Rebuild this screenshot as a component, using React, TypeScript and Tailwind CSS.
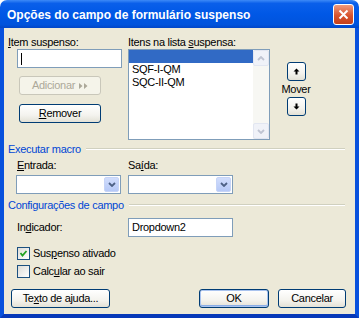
import React from "react";

const font = { fontFamily: '"Liberation Sans", Arial, sans-serif' };

const XpButton = ({
  children,
  className = "",
  disabled = false,
  isDefault = false,
}: {
  children: React.ReactNode;
  className?: string;
  disabled?: boolean;
  isDefault?: boolean;
}) => (
  <div
    className={
      "flex items-center justify-center h-[19px] rounded-[3px] border text-[11px] tracking-[-0.3px] " +
      (disabled
        ? "border-[#C9C7BA] bg-[#F5F4EA] text-[#ACA899] "
        : "border-[#003C74] bg-[linear-gradient(to_bottom,#FFFFFF_0%,#F4F3EE_60%,#E3E1D6_100%)] text-black ") +
      (isDefault ? "shadow-[inset_0_0_0_1px_#A9C3EE,inset_0_-1px_0_1px_#8AADE6] " : "") +
      className
    }
  >
    {children}
  </div>
);

const ArrowUp = () => (
  <svg width="7" height="7" viewBox="0 0 7 7">
    <path d="M3.5 0.5 L6.5 3.5 L4.5 3.5 L4.5 6.5 L2.5 6.5 L2.5 3.5 L0.5 3.5 Z" fill="#000" />
  </svg>
);

const ArrowDown = () => (
  <svg width="7" height="7" viewBox="0 0 7 7">
    <path d="M3.5 6.5 L6.5 3.5 L4.5 3.5 L4.5 0.5 L2.5 0.5 L2.5 3.5 L0.5 3.5 Z" fill="#000" />
  </svg>
);

const Chevron = ({ up = false, color }: { up?: boolean; color: string }) => (
  <svg width="8" height="5" viewBox="0 0 8 5">
    <path
      d={up ? "M1 4 L4 1 L7 4" : "M1 1 L4 4 L7 1"}
      fill="none"
      stroke={color}
      strokeWidth="1.8"
    />
  </svg>
);

const Combo = ({ className = "" }: { className?: string }) => (
  <div className={"flex h-[19px] w-[105px] border border-[#7F9DB9] bg-white " + className}>
    <div className="flex-1" />
    <div className="my-px mr-px flex w-[15px] items-center justify-center rounded-[2px] border border-[#C6D4F7] bg-[linear-gradient(to_bottom,#D1DDFC,#B6C9F7)]">
      <Chevron color="#4D6185" />
    </div>
  </div>
);

const Checkbox = ({ checked }: { checked: boolean }) => (
  <div className="flex h-[13px] w-[13px] items-center justify-center border border-[#1C5180] bg-[linear-gradient(135deg,#DCDCD7,#FFFFFF)]">
    {checked && (
      <svg width="9" height="9" viewBox="0 0 9 9">
        <path d="M1.5 4 L3.5 6.5 L7.5 2" fill="none" stroke="#21A121" strokeWidth="1.8" />
      </svg>
    )}
  </div>
);

const GroupHeader = ({ children }: { children: React.ReactNode }) => (
  <div className="flex h-[14px] items-center pr-[10px]">
    <span className="text-[11px] tracking-[-0.3px] text-[#0046D5]">{children}</span>
    <div className="ml-[5px] h-[2px] flex-1 border-t border-b border-t-[#D0D0BF] border-b-white" />
  </div>
);

const U = ({ children }: { children: React.ReactNode }) => (
  <span className="underline underline-offset-[1px]">{children}</span>
);

export default function App() {
  return (
    <div className="flex h-[318px] w-[359px] flex-col" style={font}>
      {/* title bar */}
      <div className="flex h-[28px] items-center justify-between rounded-t-[7px] bg-[linear-gradient(to_bottom,#3D8AF7_0%,#0A5FEA_12%,#0058E6_50%,#0053DC_88%,#0146C7_100%)] pl-[7px]">
        <span className="pt-[2px] text-[12px] font-bold text-white">
          Opções do campo de formulário suspenso
        </span>
        <div className="mr-[5px] flex h-[21px] w-[21px] items-center justify-center rounded-[3px] border border-white bg-[linear-gradient(to_bottom,#EE9A7E,#D9542E_55%,#C4401B)]">
          <svg width="11" height="11" viewBox="0 0 11 11">
            <path d="M1.5 1.5 L9.5 9.5 M9.5 1.5 L1.5 9.5" stroke="#fff" strokeWidth="2" />
          </svg>
        </div>
      </div>

      {/* body */}
      <div className="flex flex-1 flex-col border-x-[4px] border-b-[4px] border-x-[#0851DD] border-b-[#0638B8] bg-[#ECE9D8] pl-[4px] pt-[7px] text-[11px] tracking-[-0.3px] text-black">
        {/* top row */}
        <div className="flex h-[105px]">
          <div className="flex w-[120px] flex-col">
            <div className="h-[14px] leading-[14px]">
              <U>I</U>tem suspenso:
            </div>
            <div className="ml-[9px] flex h-[19px] w-[105px] items-center border border-[#7F9DB9] bg-white">
              <span className="ml-[3px] h-[12px] w-px bg-black" />
            </div>
            <XpButton disabled className="ml-[11px] mt-[8px] w-[82px] gap-[4px]">
              Adicionar
              <svg width="9" height="6" viewBox="0 0 9 6">
                <path d="M0 0 L3.5 3 L0 6 Z M5 0 L8.5 3 L5 6 Z" fill="#ACA899" />
              </svg>
            </XpButton>
            <XpButton className="ml-[11px] mt-[9px] w-[82px]">
              <U>R</U>emover
            </XpButton>
          </div>

          <div className="flex w-[142px] flex-col">
            <div className="h-[14px] leading-[14px]">
              Itens na lista <U>s</U>uspensa:
            </div>
            <div className="flex h-[91px] border border-[#7F9DB9] bg-white">
              <div className="flex flex-1 flex-col">
                <div className="h-[13px] bg-[#316AC5]" />
                <div className="h-[13px] pl-[3px] leading-[13px]">SQF-I-QM</div>
                <div className="h-[13px] pl-[3px] leading-[13px]">SQC-II-QM</div>
              </div>
              <div className="flex w-[16px] flex-col bg-[#F7F7F3]">
                <div className="flex h-[16px] items-center justify-center rounded-[2px] border border-[#E2E6F1] bg-[#F0F2F8]">
                  <Chevron up color="#BFC4D2" />
                </div>
                <div className="flex-1" />
                <div className="flex h-[16px] items-center justify-center rounded-[2px] border border-[#E2E6F1] bg-[#F0F2F8]">
                  <Chevron color="#BFC4D2" />
                </div>
              </div>
            </div>
          </div>

          <div className="ml-[6px] flex w-[40px] flex-col items-center pt-[27px]">
            <XpButton className="w-[19px]">
              <ArrowUp />
            </XpButton>
            <div className="mt-px h-[14px] leading-[14px]">Mover</div>
            <XpButton className="mt-px w-[19px]">
              <ArrowDown />
            </XpButton>
          </div>
        </div>

        {/* executar macro */}
        <div className="mt-[2px]">
          <GroupHeader>Executar macro</GroupHeader>
        </div>
        <div className="mt-[2px] flex h-[14px] leading-[14px]">
          <div className="ml-[9px] w-[111px]">
            <U>E</U>ntrada:
          </div>
          <div>
            Sa<U>í</U>da:
          </div>
        </div>
        <div className="mt-[3px] flex">
          <Combo className="ml-[8px]" />
          <Combo className="ml-[7px]" />
        </div>

        {/* configuracoes */}
        <div className="mt-[4px]">
          <GroupHeader>Configurações de campo</GroupHeader>
        </div>
        <div className="mt-[6px] flex items-center">
          <div className="ml-[9px] w-[111px]">
            In<U>d</U>icador:
          </div>
          <div className="flex h-[19px] w-[105px] items-center border border-[#7F9DB9] bg-white pl-[3px]">
            Dropdown2
          </div>
        </div>
        <div className="ml-[9px] mt-[10px] flex h-[13px] items-center gap-[3px]">
          <Checkbox checked />
          <span>
            Sus<U>p</U>enso ativado
          </span>
        </div>
        <div className="ml-[9px] mt-[5px] flex h-[13px] items-center gap-[3px]">
          <Checkbox checked={false} />
          <span>
            Calc<U>u</U>lar ao sair
          </span>
        </div>

        {/* bottom buttons */}
        <div className="mt-[11px] flex pr-[9px]">
          <XpButton className="ml-[3px] w-[99px]">
            Te<U>x</U>to de ajuda...
          </XpButton>
          <div className="flex-1" />
          <XpButton isDefault className="w-[70px]">
            OK
          </XpButton>
          <XpButton className="ml-[9px] w-[68px]">Cancelar</XpButton>
        </div>
      </div>
    </div>
  );
}
